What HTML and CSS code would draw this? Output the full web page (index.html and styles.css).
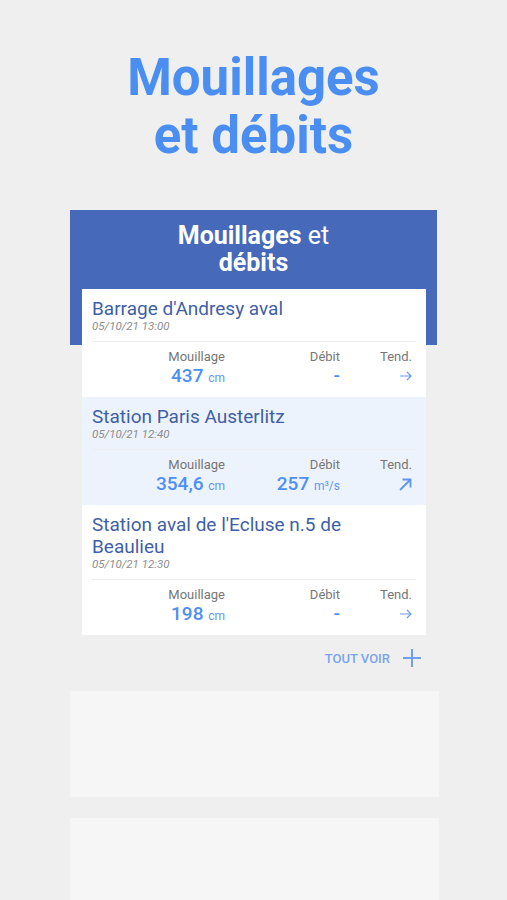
FILE: index.html
```html
<!DOCTYPE html>
<html lang="fr">
<head>
    <meta charset="UTF-8">
    <meta name="viewport" content="width=device-width, initial-scale=1.0">
    <title>Mouillages et débits</title>
    <link rel="stylesheet" href="styles.css">
</head>
<body>
    <h1 class="hero">Mouillages<br>et débits</h1>

    <!-- Widget -->
    <div class="panel">
        <div class="panel-head">
            <h2><b>Mouillages</b> et<br><b>débits</b></h2>
        </div>
        <div class="list">
            <div class="station">
                <div class="station-name">Barrage d'Andresy aval</div>
                <div class="station-date">05/10/21 13:00</div>
                <div class="stats">
                    <div class="stat">
                        <span class="label">Mouillage</span>
                        <span class="value">437 <small>cm</small></span>
                    </div>
                    <div class="stat">
                        <span class="label">Débit</span>
                        <span class="value">-</span>
                    </div>
                    <div class="stat">
                        <span class="label">Tend.</span>
                        <span class="trend">
                            <svg width="12" height="10" viewBox="0 0 12 10"><path d="M0 5H11M7 1L11 5L7 9" stroke="#6d9cf0" stroke-width="1.2" fill="none"/></svg>
                        </span>
                    </div>
                </div>
            </div>
            <div class="station alt">
                <div class="station-name">Station Paris Austerlitz</div>
                <div class="station-date">05/10/21 12:40</div>
                <div class="stats">
                    <div class="stat">
                        <span class="label">Mouillage</span>
                        <span class="value">354,6 <small>cm</small></span>
                    </div>
                    <div class="stat">
                        <span class="label">Débit</span>
                        <span class="value">257 <small>m³/s</small></span>
                    </div>
                    <div class="stat">
                        <span class="label">Tend.</span>
                        <span class="trend">
                            <svg width="13" height="13" viewBox="0 0 13 13"><path d="M1 12L11.5 1.5M3.5 1.5H11.5V9.5" stroke="#5f95ee" stroke-width="1.8" fill="none"/></svg>
                        </span>
                    </div>
                </div>
            </div>
            <div class="station">
                <div class="station-name">Station aval de l'Ecluse n.5 de Beaulieu</div>
                <div class="station-date">05/10/21 12:30</div>
                <div class="stats">
                    <div class="stat">
                        <span class="label">Mouillage</span>
                        <span class="value">198 <small>cm</small></span>
                    </div>
                    <div class="stat">
                        <span class="label">Débit</span>
                        <span class="value">-</span>
                    </div>
                    <div class="stat">
                        <span class="label">Tend.</span>
                        <span class="trend">
                            <svg width="12" height="10" viewBox="0 0 12 10"><path d="M0 5H11M7 1L11 5L7 9" stroke="#6d9cf0" stroke-width="1.2" fill="none"/></svg>
                        </span>
                    </div>
                </div>
            </div>
        </div>
        <div class="more">
            TOUT VOIR
            <svg width="18" height="18" viewBox="0 0 18 18">
                <path d="M9 0V18M0 9H18" stroke="#6f9ff0" stroke-width="2" fill="none"/>
            </svg>
        </div>
    </div>

    <!-- Placeholders -->
    <div class="placeholder"></div>
    <div class="placeholder"></div>
</body>
</html>
```

FILE: styles.css
```css
body {
    margin: 0;
    background-color: #efefef;
    font-family: Roboto, "Liberation Sans", sans-serif;
}
.hero {
    margin: 0;
    padding-top: 49px;
    text-align: center;
    font-size: 51px;
    line-height: 58px;
    font-weight: 700;
    color: #4b8ef1;
}
.panel {
    margin: 45px 70px 0;
}
.panel-head {
    background-color: #4669ba;
    padding: 12px 12px 69px;
}
.panel-head h2 {
    margin: 0;
    text-align: center;
    color: #fff;
    font-size: 25px;
    line-height: 27px;
    font-weight: 400;
}
.panel-head b {
    font-weight: 700;
}
.list {
    margin: -56px 11px 0 12px;
    background-color: #fff;
}
.station {
    padding: 9px 10px 8px;
}
.station.alt {
    background-color: #edf3fc;
}
.station-name {
    font-size: 19px;
    line-height: 22px;
    color: #3f5fa6;
}
.station-date {
    font-size: 11.5px;
    line-height: 13px;
    font-style: italic;
    color: #8d8d8d;
    padding-bottom: 8px;
    border-bottom: 1px solid #eeeeee;
}
.stats {
    display: grid;
    grid-template-columns: 133px 115px 72px;
    padding: 7px 4px 0 0;
    text-align: right;
}
.stat .label {
    display: block;
    font-size: 13px;
    line-height: 16px;
    color: #777;
}
.stat .value {
    display: block;
    font-size: 19px;
    line-height: 22px;
    font-weight: 500;
    color: #4d8ff2;
}
.stat .value small {
    font-size: 12px;
    font-weight: 400;
    color: #5f97ef;
}
.stat .trend {
    display: flex;
    justify-content: flex-end;
    align-items: center;
    height: 22px;
}
.more {
    display: flex;
    justify-content: flex-end;
    align-items: center;
    gap: 13px;
    padding: 14px 16px 0 0;
    font-size: 13px;
    font-weight: 500;
    color: #7aa5ef;
}
.placeholder {
    margin: 24px 68px 0 70px;
    height: 106px;
    background-color: #f6f6f6;
}
.placeholder + .placeholder {
    margin-top: 21px;
    height: 120px;
}
```
